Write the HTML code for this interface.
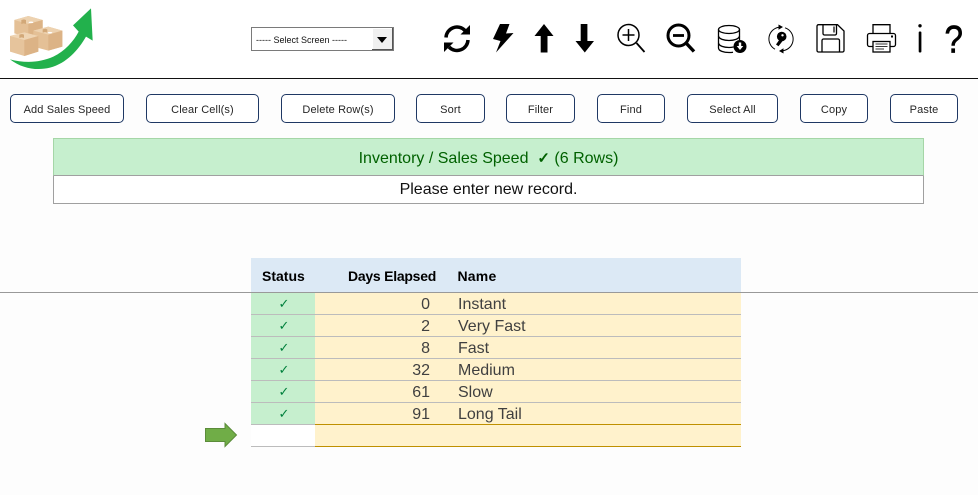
<!DOCTYPE html>
<html><head><meta charset="utf-8"><style>
html,body{margin:0;padding:0;background:#fff;width:978px;height:495px;overflow:hidden}
body{position:relative;font-family:"Liberation Sans",sans-serif}
.a{position:absolute}
.b{position:absolute;top:94px;height:27px;box-sizing:content-box;border:1px solid #1f3864;border-radius:5px;background:#fff;font-size:11px;line-height:30px;letter-spacing:.12px;text-align:center;color:#262626}
.r{position:absolute;height:21px;line-height:21px;font-size:16px;color:#404040}
.c{position:absolute;left:251px;width:66px;height:21px;text-align:center;color:#00803c;font:13px/23px "DejaVu Sans",sans-serif}
.cb{position:absolute;left:251px;width:64px;height:21px;background:#c6efce}
.y{position:absolute;left:315px;width:426px;height:21px;background:#fff2cc}
.l{position:absolute;height:1px;background:#bcbcbc}
.h{position:absolute;top:268px;font:bold 14px/16px "Liberation Sans",sans-serif;color:#000}
</style></head><body>
<div class="a" style="left:0;top:79px;width:978px;height:416px;background:#fdfdfd"></div>
<div class="a" style="left:0;top:78px;width:978px;height:1px;background:#111"></div>

<svg class="a" style="left:0;top:0" width="130" height="78" viewBox="0 0 390 234">
<path d="M43 60L85 48L128 60V100L85 112L43 100Z" fill="#e4c096"/><path d="M43 60L85 72L128 60L85 48Z" fill="#edd2b0"/><path d="M85 72V112L128 100V60Z" fill="#dcb386"/>
<path d="M100 92L145 80L187 92V140L145 152L100 140Z" fill="#e4c096"/><path d="M100 92L145 104L187 92L145 80Z" fill="#edd2b0"/><path d="M145 104V152L187 140V92Z" fill="#dcb386"/>
<path d="M30 108L73 97L115 108V155L73 168L30 155Z" fill="#e6c49c"/><path d="M30 108L73 120L115 108L73 97Z" fill="#efd5b4"/><path d="M73 120V168L115 155V108Z" fill="#dcb386"/>
<path d="M64 60l8-2 6 2v12l-7-2-7 2z" fill="#d2a878"/><path d="M58 104l8-2 6 2v10l-7-2-7 2z" fill="#d2a878"/><path d="M128 88l8-2 6 2v10l-7-2-7 2z" fill="#d2a878"/>
<ellipse cx="93" cy="67" rx="7" ry="2.500" fill="#fff"/><ellipse cx="150" cy="98" rx="7" ry="2.500" fill="#fff"/>
<path d="M30 178C75 190 120 188 160 170C195 153 220 125 236 95L219 76L273 25L278 122L258 110C235 150 200 190 150 203C110 213 65 205 30 178Z" fill="#22b14c"/>
</svg>

<div class="a" style="left:251px;top:27px;width:141px;height:22px;border:1px solid #7a7a7a;background:#fff;font-size:9px;line-height:24px;color:#111;"><span style="position:absolute;left:4px;top:0;white-space:nowrap">----- Select Screen -----</span>
<div class="a" style="right:0;top:0;width:21px;height:22px;background:#f0f0f0;box-shadow:inset -1px -1px 0 #555,inset 1px 1px 0 #fff"><div class="a" style="left:5px;top:9px;width:0;height:0;border-left:5.500px solid transparent;border-right:5.500px solid transparent;border-top:6px solid #000"></div></div></div>

<svg class="a" style="left:0;top:0" width="978" height="78" viewBox="0 0 978 78">
<!-- refresh -->
<g fill="none" stroke="#000" stroke-width="3.500"><path d="M446 37.500A11 11 0 0 1 465 30.500"/><path d="M468 40A11 11 0 0 1 449 47"/></g>
<path d="M470 25V34.500H460.500Z"/><path d="M444 52V42.500H453.500Z"/>
<!-- bolt -->
<path d="M500 24H509.500L506 33.500L513.500 33L496 52.500L500.500 41L493 39Z"/>
<!-- up / down -->
<path d="M544 24L553.500 36H547.500V52.500H540.700V36H534.500Z"/>
<path d="M580.700 24H587.400V41H594L584.800 52.500L575.500 41H580.700Z"/>
<!-- zoom in -->
<g fill="none" stroke="#000"><circle cx="628.500" cy="35" r="10.500" stroke-width="1.500"/><path d="M636.500 43L644.500 52" stroke-width="1.800"/><path d="M622.500 35H634.500M628.500 29V41" stroke-width="1.500"/></g>
<!-- zoom out -->
<g fill="none" stroke="#000"><circle cx="678.500" cy="35.500" r="10.500" stroke-width="3"/><path d="M686.500 43.500L694 51.500" stroke-width="3.400"/><path d="M673 35.500H684" stroke-width="2.800"/></g>
<!-- database -->
<g fill="none" stroke="#000" stroke-width="1.300"><ellipse cx="729" cy="29.500" rx="10.500" ry="4"/><path d="M718.500 29.500V48C718.500 51 724 52.500 729 52.500C731 52.500 732 52.400 733 52.200"/><path d="M739.500 29.500V40"/><path d="M718.500 36C719 39 724 40.500 729 40.500C734 40.500 739 39 739.500 36"/><path d="M718.500 43C719 46 724 47.500 729 47.500C730.500 47.500 732 47.300 733.500 47"/></g>
<circle cx="740" cy="46.500" r="6.500"/><path d="M738.800 42.500H741.200V46H743.300L740 50L736.700 46H738.800Z" fill="#fff"/>
<!-- key sync -->
<g fill="none" stroke="#000" stroke-width="1"><path d="M779 27.200A11.800 11.800 0 0 0 775 49.200"/><path d="M785 27.800A11.800 11.800 0 0 1 783 50.700"/></g>
<path d="M778.500 24.500L783 27L778.500 29.800Z"/><path d="M783.500 53.500L779 51L783.500 48.200Z"/>
<circle cx="781.700" cy="36.500" r="4.800"/><path d="M779.500 39.500L776 44.500L778.500 46.300L783 40.500Z"/><circle cx="782.500" cy="35.300" r="1.200" fill="#fff"/>
<!-- floppy -->
<g fill="none" stroke="#000" stroke-width="1.300"><path d="M818.500 24.700H837.500L844 31V50.500A1.500 1.500 0 0 1 842.500 52H818.500A1.500 1.500 0 0 1 817 50.500V26.200A1.500 1.500 0 0 1 818.500 24.700Z"/><path d="M823 25V33.500A1.500 1.500 0 0 0 824.500 35H835A1.500 1.500 0 0 0 836.500 33.500V25"/><path d="M822 52V40.500A1.500 1.500 0 0 1 823.500 39H838A1.500 1.500 0 0 1 839.500 40.500V52"/></g>
<rect x="833" y="26.500" width="2" height="6" fill="#666"/>
<!-- printer -->
<g fill="none" stroke="#000" stroke-width="1.300"><path d="M873 33V24.700H890V33"/><path d="M873 46.500H869.500A2 2 0 0 1 867.500 44.500V35.500A2 2 0 0 1 869.500 33.500H893.500A2 2 0 0 1 895.500 35.500V44.500A2 2 0 0 1 893.500 46.500H890"/><rect x="873" y="41.500" width="17" height="10.500"/></g>
<path d="M875.500 44H887.500M875.500 46.500H887.500M875.500 49H884" stroke="#333" stroke-width="1" fill="none"/>
<rect x="891" y="35.500" width="2" height="2"/>
<!-- i -->
<circle cx="920" cy="25.800" r="1.700"/><rect x="918.700" y="31.500" width="2.700" height="21" rx="1"/>
<!-- ? -->
<text transform="translate(944.500 52.700) scale(.86 1)" font-family="Liberation Sans" font-size="38.500" fill="#000" stroke="#000" stroke-width=".7">?</text>
</svg>

<div class="b" style="left:10px;width:112px">Add Sales Speed</div>
<div class="b" style="left:146px;width:111px">Clear Cell(s)</div>
<div class="b" style="left:281px;width:112px">Delete Row(s)</div>
<div class="b" style="left:416px;width:67px">Sort</div>
<div class="b" style="left:506px;width:67px">Filter</div>
<div class="b" style="left:597px;width:66px">Find</div>
<div class="b" style="left:687px;width:89px">Select All</div>
<div class="b" style="left:800px;width:66px">Copy</div>
<div class="b" style="left:890px;width:66px">Paste</div>

<div class="a" style="left:53px;top:138px;width:869px;height:36px;background:#c6efce;border:1px solid #a5d6a7;border-bottom:1px solid #a0a0a0;text-align:center;font-size:16px;line-height:38px;color:#006100">Inventory / Sales Speed &nbsp;<span style="font-family:'DejaVu Sans',sans-serif;font-size:15px;-webkit-text-stroke:.6px #006100">✓</span> (6 Rows)</div>
<div class="a" style="left:53px;top:176px;width:869px;height:27px;background:#fff;border:1px solid #a0a0a0;border-top:0;text-align:center;font-size:16px;line-height:28px;color:#111">Please enter new record.</div>

<div class="a" style="left:251px;top:258px;width:490px;height:34px;background:#dce9f5"></div>
<div class="h" style="left:262px">Status</div>
<div class="h" style="left:348px;letter-spacing:-.25px">Days Elapsed</div>
<div class="h" style="left:457.500px;letter-spacing:.2px">Name</div>
<div class="a" style="left:0;top:292px;width:978px;height:1px;background:#999"></div>

<div class="cb" style="top:293px"></div><div class="y" style="top:293px"></div>
<div class="cb" style="top:315px"></div><div class="y" style="top:315px"></div>
<div class="cb" style="top:337px"></div><div class="y" style="top:337px"></div>
<div class="cb" style="top:359px"></div><div class="y" style="top:359px"></div>
<div class="cb" style="top:381px"></div><div class="y" style="top:381px"></div>
<div class="cb" style="top:403px"></div><div class="y" style="top:403px"></div>
<div class="a" style="left:251px;top:425px;width:64px;height:21px;background:#fff"></div><div class="y" style="top:425px"></div>
<div class="c" style="top:293px">✓</div><div class="c" style="top:315px">✓</div><div class="c" style="top:337px">✓</div><div class="c" style="top:359px">✓</div><div class="c" style="top:381px">✓</div><div class="c" style="top:403px">✓</div>

<div class="l" style="left:251px;width:490px;top:314px"></div>
<div class="l" style="left:251px;width:490px;top:336px"></div>
<div class="l" style="left:251px;width:490px;top:358px"></div>
<div class="l" style="left:251px;width:490px;top:380px"></div>
<div class="l" style="left:251px;width:490px;top:402px"></div>
<div class="l" style="left:251px;width:64px;top:424px"></div>
<div class="l" style="left:251px;width:64px;top:446px"></div>
<div class="l" style="left:315px;width:426px;top:424px;background:#bf9000"></div>
<div class="l" style="left:315px;width:426px;top:446px;background:#bf9000"></div>

<div class="r" style="left:330px;width:100px;text-align:right;top:294px">0</div><div class="r" style="left:458px;top:294px">Instant</div>
<div class="r" style="left:330px;width:100px;text-align:right;top:316px">2</div><div class="r" style="left:458px;top:316px">Very Fast</div>
<div class="r" style="left:330px;width:100px;text-align:right;top:338px">8</div><div class="r" style="left:458px;top:338px">Fast</div>
<div class="r" style="left:330px;width:100px;text-align:right;top:360px">32</div><div class="r" style="left:458px;top:360px">Medium</div>
<div class="r" style="left:330px;width:100px;text-align:right;top:382px">61</div><div class="r" style="left:458px;top:382px">Slow</div>
<div class="r" style="left:330px;width:100px;text-align:right;top:404px">91</div><div class="r" style="left:458px;top:404px">Long Tail</div>

<svg class="a" style="left:200px;top:420px" width="40" height="30" viewBox="200 420 40 30"><path d="M205.500 428.500H225V423.500L236.500 435L225 446.500V441.500H205.500Z" fill="#70ad47" stroke="#5b8c3a" stroke-width="1"/></svg>
</body></html>
